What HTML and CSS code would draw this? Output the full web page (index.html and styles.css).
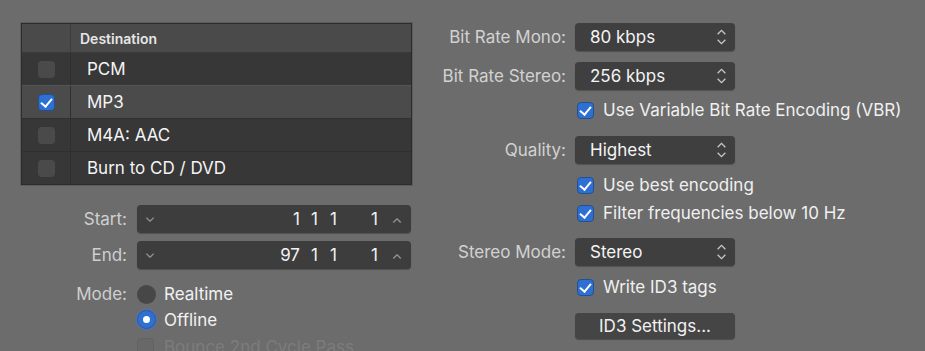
FILE: index.html
```html
<!DOCTYPE html>
<html lang="en">
<head>
    <title>Bounce Settings</title>
    <link rel="stylesheet" href="styles.css">
</head>
<body>
    <div class="panel">
        <div class="left-col">
            <div class="dest-table">
                <div class="dest-row dest-head">
                    <div class="dest-check"></div>
                    <div class="dest-name">Destination</div>
                </div>
                <div class="dest-row">
                    <div class="dest-check"><span class="box"></span></div>
                    <div class="dest-name">PCM</div>
                </div>
                <div class="dest-row selected">
                    <div class="dest-check"><span class="box checked"></span></div>
                    <div class="dest-name">MP3</div>
                </div>
                <div class="dest-row">
                    <div class="dest-check"><span class="box"></span></div>
                    <div class="dest-name">M4A: AAC</div>
                </div>
                <div class="dest-row last">
                    <div class="dest-check"><span class="box"></span></div>
                    <div class="dest-name">Burn to CD / DVD</div>
                </div>
            </div>

            <div class="form-row start-row">
                <label class="form-label">Start:</label>
                <div class="pos-field">
                    <span class="step down">&#8964;</span>
                    <span class="pos-values">
                        <span class="seg bar">1</span><span class="seg beat">1</span><span class="seg div">1</span><span class="seg tick">1</span>
                    </span>
                    <span class="step up">&#8963;</span>
                </div>
            </div>
            <div class="form-row end-row">
                <label class="form-label">End:</label>
                <div class="pos-field">
                    <span class="step down">&#8964;</span>
                    <span class="pos-values">
                        <span class="seg bar">97</span><span class="seg beat">1</span><span class="seg div">1</span><span class="seg tick">1</span>
                    </span>
                    <span class="step up">&#8963;</span>
                </div>
            </div>
            <div class="form-row mode-row">
                <label class="form-label">Mode:</label>
                <div class="radio-list">
                    <div class="radio-item"><span class="radio"></span>Realtime</div>
                    <div class="radio-item"><span class="radio on"></span>Offline</div>
                    <div class="radio-item disabled"><span class="box faint"></span>Bounce 2nd Cycle Pass</div>
                </div>
            </div>
        </div>

        <div class="right-col">
            <div class="opt-row popup-row r1">
                <label class="opt-label">Bit Rate Mono:</label>
                <div class="popup">80 kbps<svg class="updown" viewBox="0 0 10 18"><path d="M1.5 6.5 L5 3 L8.5 6.5 M1.5 11.5 L5 15 L8.5 11.5"/></svg></div>
            </div>
            <div class="opt-row popup-row r2">
                <label class="opt-label">Bit Rate Stereo:</label>
                <div class="popup">256 kbps<svg class="updown" viewBox="0 0 10 18"><path d="M1.5 6.5 L5 3 L8.5 6.5 M1.5 11.5 L5 15 L8.5 11.5"/></svg></div>
            </div>
            <div class="opt-row check-row r3">
                <span class="opt-label"></span>
                <div class="check-item"><span class="box checked"></span>Use Variable Bit Rate Encoding (VBR)</div>
            </div>
            <div class="opt-row popup-row r4">
                <label class="opt-label">Quality:</label>
                <div class="popup">Highest<svg class="updown" viewBox="0 0 10 18"><path d="M1.5 6.5 L5 3 L8.5 6.5 M1.5 11.5 L5 15 L8.5 11.5"/></svg></div>
            </div>
            <div class="opt-row check-row r5">
                <span class="opt-label"></span>
                <div class="check-item"><span class="box checked"></span>Use best encoding</div>
            </div>
            <div class="opt-row check-row r6">
                <span class="opt-label"></span>
                <div class="check-item"><span class="box checked"></span>Filter frequencies below 10 Hz</div>
            </div>
            <div class="opt-row popup-row r7">
                <label class="opt-label">Stereo Mode:</label>
                <div class="popup">Stereo<svg class="updown" viewBox="0 0 10 18"><path d="M1.5 6.5 L5 3 L8.5 6.5 M1.5 11.5 L5 15 L8.5 11.5"/></svg></div>
            </div>
            <div class="opt-row check-row r8">
                <span class="opt-label"></span>
                <div class="check-item"><span class="box checked"></span>Write ID3 tags</div>
            </div>
            <div class="opt-row r9">
                <span class="opt-label"></span>
                <button class="push-btn">ID3 Settings...</button>
            </div>
        </div>
    </div>
</body>
</html>
```

FILE: styles.css
```css
html, body {
    margin: 0;
    height: 100%;
    overflow: hidden;
}
body {
    background-color: #6c6c6c;
    font-family: Inter, "Open Sans", sans-serif;
    color: #f2f2f2;
}
.panel {
    display: flex;
    padding: 23px 0 0 21px;
}

/* left column */
.left-col {
    width: 391px;
}
.dest-table {
    border: 1px solid #2c2c2c;
    background: #363636;
    box-shadow: 0 0 0 1px #5c5c5c;
}
.dest-row {
    display: flex;
    height: 32px;
    border-bottom: 1px solid #303030;
    background: #373737;
}
.dest-row.last {
    border-bottom: none;
}
.dest-row.selected {
    background: #4b4b4b;
    border-top: 1px solid #555;
    margin-top: -1px;
}
.dest-head {
    height: 28px;
    background: #4a4a4a;
    border-bottom: 1px solid #3a3a3a;
}
.dest-check {
    width: 48px;
    border-right: 1px solid #2f2f2f;
    display: flex;
    align-items: center;
    justify-content: center;
}
.dest-head .dest-check {
    border-right-color: #3c3c3c;
}
.dest-name {
    display: flex;
    align-items: center;
    padding-left: 16px;
    font-size: 17px;
    color: #f4f4f4;
}
.dest-head .dest-name {
    padding-left: 9px;
    font-size: 14px;
    font-weight: 600;
    color: #e6e6e6;
}

.box {
    display: inline-block;
    width: 17px;
    height: 17px;
    border-radius: 4px;
    background: #4a4a4a;
    box-sizing: border-box;
    position: relative;
    flex-shrink: 0;
}
.box.checked {
    background: #2d6fd3;
    border: 1px solid #24508f;
}
.box.checked::after {
    content: "";
    position: absolute;
    left: 4px;
    top: 1px;
    width: 5px;
    height: 9px;
    border: solid #fff;
    border-width: 0 2px 2px 0;
    transform: rotate(40deg);
}
.box.faint {
    background: #686868;
    border: 1px solid #626262;
}

.form-row {
    display: flex;
}
.form-label {
    width: 116px;
    text-align: right;
    padding-right: 10px;
    box-sizing: border-box;
    color: #cfcfcf;
    font-size: 17px;
    line-height: 28px;
}
.start-row {
    margin-top: 20px;
}
.end-row {
    margin-top: 8px;
}
.pos-field {
    width: 274px;
    height: 28px;
    background: #3d3d3d;
    border-radius: 4px;
    box-shadow: 0 1px 1px rgba(0, 0, 0, 0.25);
    display: flex;
    align-items: center;
    font-size: 17px;
}
.step {
    color: #9a9a9a;
    font-size: 14px;
    width: 26px;
    text-align: center;
}
.step.down {
    margin-top: -6px;
}
.step.up {
    margin-top: 8px;
    width: 28px;
}
.pos-values {
    display: flex;
    margin-left: auto;
    margin-right: 5px;
}
.seg {
    text-align: right;
}
.seg.bar { width: 40px; }
.seg.beat { width: 18px; }
.seg.div { width: 19px; }
.seg.tick { width: 41px; }

.mode-row {
    margin-top: 13px;
}
.mode-row .form-label {
    line-height: 24px;
}
.radio-list {
    display: flex;
    flex-direction: column;
}
.radio-item {
    display: flex;
    align-items: center;
    height: 27px;
    font-size: 17px;
    color: #f2f2f2;
}
.radio-item:first-child {
    height: 24px;
}
.radio {
    width: 19px;
    height: 19px;
    border-radius: 50%;
    background: #474747;
    margin-right: 8px;
    box-sizing: border-box;
    flex-shrink: 0;
}
.radio.on {
    background: #2e70d4;
    border: 1px solid #2a5aa0;
    box-shadow: 0 0 0 2px rgba(60, 120, 220, 0.35);
    display: flex;
    align-items: center;
    justify-content: center;
}
.radio.on::after {
    content: "";
    width: 7px;
    height: 7px;
    border-radius: 50%;
    background: #fff;
}
.radio-item.disabled {
    color: #7c7c7c;
}
.radio-item.disabled .box {
    margin-right: 10px;
}

/* right column */
.right-col {
    margin-left: 18px;
}
.opt-row {
    display: flex;
    align-items: center;
}
.opt-label {
    width: 136px;
    text-align: right;
    color: #d2d2d2;
    font-size: 17px;
    margin-right: 9px;
}
.popup-row {
    height: 28px;
}
.check-row {
    height: 24px;
}
.r2 { margin-top: 11px; }
.r3 { margin-top: 8px; }
.r4 { margin-top: 14px; }
.r5 { margin-top: 9px; }
.r6 { margin-top: 4px; }
.r7 { margin-top: 13px; }
.r8 { margin-top: 9px; }
.r9 { margin-top: 14px; }

.popup {
    width: 160px;
    height: 28px;
    box-sizing: border-box;
    background: #3f3f3f;
    border-radius: 4px;
    box-shadow: 0 1px 1px rgba(0, 0, 0, 0.25);
    padding-left: 15px;
    display: flex;
    align-items: center;
    font-size: 17px;
    color: #f4f4f4;
}
.updown {
    width: 11px;
    height: 20px;
    margin-left: auto;
    margin-right: 8px;
    fill: none;
    stroke: #c8c8c8;
    stroke-width: 1.2;
}
.check-item {
    display: flex;
    align-items: center;
    font-size: 17px;
    color: #f0f0f0;
}
.check-item .box {
    margin: 0 9px 0 2px;
}
.push-btn {
    width: 160px;
    height: 26px;
    background: #454545;
    border: none;
    border-radius: 4px;
    box-shadow: 0 1px 1px rgba(0, 0, 0, 0.3);
    color: #f2f2f2;
    font-family: inherit;
    font-size: 17px;
    padding: 0;
}
```
